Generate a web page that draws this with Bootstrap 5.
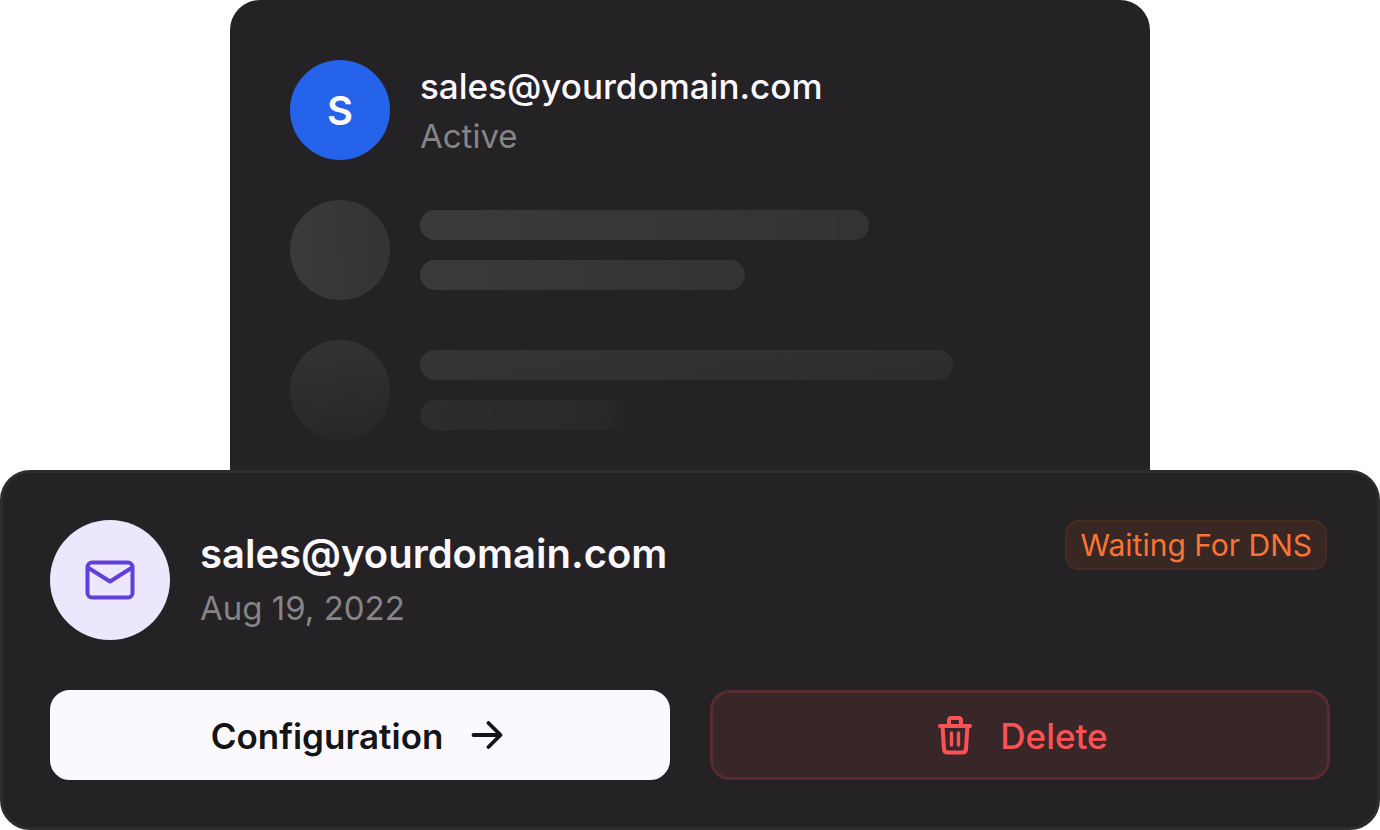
<!DOCTYPE html>
<html lang="en">
<head>
<meta charset="utf-8">
<meta name="viewport" content="width=device-width, initial-scale=1">
<title>Domain mailboxes</title>
<link href="https://cdn.jsdelivr.net/npm/bootstrap@5.3.0/dist/css/bootstrap.min.css" rel="stylesheet">
<style>
  body { background: #fff; font-family: Inter, "Liberation Sans", sans-serif; color: #fbf9ff; }
  .panel { background: #242225; }
  .mailbox-list { padding: 60px 60px 30px; border-radius: 30px 30px 0 0; gap: 40px; }
  .domain { padding: 47px; border: 3px solid #2d2c2f; border-radius: 30px; }
  .entry { gap: 30px; }
  .avatar { width: 100px; height: 100px; flex: none; border-radius: 50%; }
  .avatar-letter { background: #2563eb; font-size: 40px; line-height: 50px; font-weight: 600; padding-top: 2px; }
  .avatar-mail { width: 120px; height: 120px; background: #ede7fe; color: #623fd8; }
  .address { font-size: 35px; line-height: 52px; font-weight: 500; }
  .address-lg { font-size: 40px; line-height: 60px; font-weight: 600; }
  .subline { font-size: 33px; line-height: 48px; color: #868487; }
  .bar { height: 30px; border-radius: 15px; }
  .bars { gap: 20px; padding: 10px 0; }
  .tone-1 { background: linear-gradient(90deg, #3b393c, #343235); }
  .tone-2 { background: linear-gradient(170deg, #363437, #2e2c2f); }
  .tone-3 { background: linear-gradient(100deg, #2e2c2f, #2a282b 85%, #242225); }
  .tone-fade { background: linear-gradient(170deg, #353336, #272528); }
  .status { font-size: 30px; line-height: 46px; color: #f97434; background: #382723; border: 2px solid #482c22; border-radius: 14px; padding: 0 13px; margin-right: 3px; }
  .actions { gap: 40px; margin-top: 50px; }
  .action { height: 90px; padding-top: 8px; border-radius: 20px; font-size: 35px; line-height: 50px; gap: 28px; --bs-btn-border-width: 3px; }
  .action-config { --bs-btn-bg: #fbf9fe; --bs-btn-color: #151417; --bs-btn-border-color: #fbf9fe; --bs-btn-hover-bg: #edeaf3; --bs-btn-hover-color: #151417; font-weight: 600; padding-right: 18px; }
  .action-delete { --bs-btn-bg: #382628; --bs-btn-color: #fa5255; --bs-btn-border-color: #582c2f; --bs-btn-hover-bg: #482a2d; --bs-btn-hover-color: #fa5255; font-weight: 500; padding-left: 18px; }
</style>
</head>
<body>
<main class="container-fluid p-0">
  <div class="row g-0 justify-content-center">
    <section class="col-8">
      <div class="panel mailbox-list d-flex flex-column">
        <div class="entry d-flex">
          <div class="avatar avatar-letter d-flex align-items-center justify-content-center">S</div>
          <div>
            <div class="address">sales@yourdomain.com</div>
            <div class="subline">Active</div>
          </div>
        </div>
        <div class="entry d-flex" aria-hidden="true">
          <div class="avatar tone-1"></div>
          <div class="bars flex-grow-1 d-flex flex-column">
            <div class="bar tone-1" style="width:67%"></div>
            <div class="bar tone-1" style="width:48.5%"></div>
          </div>
        </div>
        <div class="entry d-flex" aria-hidden="true">
          <div class="avatar tone-fade"></div>
          <div class="bars flex-grow-1 d-flex flex-column">
            <div class="bar tone-2" style="width:79.5%"></div>
            <div class="bar tone-3" style="width:31%"></div>
          </div>
        </div>
      </div>
    </section>
  </div>
  <section class="panel domain">
    <div class="d-flex justify-content-between align-items-start">
      <div class="entry d-flex align-items-center">
        <div class="avatar avatar-mail d-flex align-items-center justify-content-center">
          <svg width="50" height="40" viewBox="0 0 50 40" fill="none" stroke="currentColor" stroke-width="4" stroke-linejoin="round" aria-hidden="true"><rect x="2.500" y="2.500" width="45" height="35" rx="4.500"/><path d="M2 7 25 21.500 48 7"/></svg>
        </div>
        <div class="pb-1">
          <div class="address-lg">sales@yourdomain.com</div>
          <div class="subline">Aug 19, 2022</div>
        </div>
      </div>
      <span class="status">Waiting For DNS</span>
    </div>
    <div class="actions d-flex">
      <button type="button" class="btn action action-config flex-fill w-50 d-flex align-items-center justify-content-center">Configuration
        <svg width="32" height="30" viewBox="0 0 32 30" fill="none" stroke="currentColor" stroke-width="3.800" stroke-linecap="round" stroke-linejoin="round" aria-hidden="true"><path d="M2.500 14H29.500M17.500 2 29.500 14 17.500 26"/></svg>
      </button>
      <button type="button" class="btn action action-delete flex-fill w-50 d-flex align-items-center justify-content-center">
        <svg width="34" height="40" viewBox="0 0 34 40" fill="none" stroke="currentColor" stroke-width="4" stroke-linecap="round" stroke-linejoin="round" aria-hidden="true"><path d="M2 10H32M4.500 10 6 33Q6.300 36.500 9.500 36.500H24.500Q27.700 36.500 28 33L29.500 10M11 10V4.500Q11 2 13.500 2H20.500Q23 2 23 4.500V10"/><path stroke-width="3.400" d="M13.500 17V29M20.500 17V29"/></svg>
        Delete
      </button>
    </div>
  </section>
</main>
<script src="https://cdn.jsdelivr.net/npm/bootstrap@5.3.0/dist/js/bootstrap.bundle.min.js"></script>
</body>
</html>
